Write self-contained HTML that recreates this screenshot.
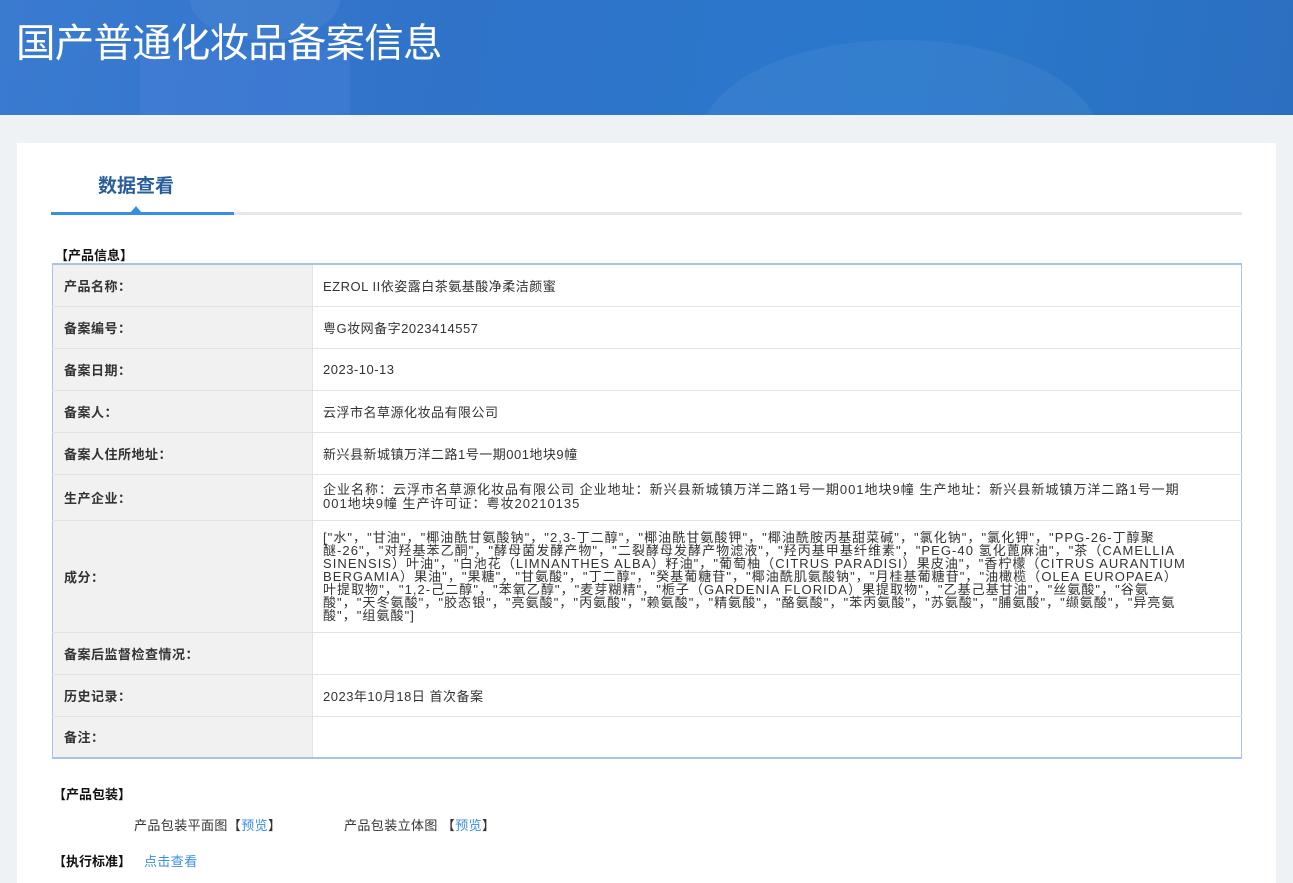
<!DOCTYPE html>
<html><head><meta charset="utf-8"><style>
*{margin:0;padding:0;box-sizing:border-box}
body{width:1293px;height:873px;overflow:hidden;background:#eff2f5;font-family:"Liberation Sans","Noto Sans CJK SC",sans-serif;color:#333;font-size:13px;position:relative}
.hd{position:absolute;left:0;top:0;width:1293px;height:115px;background:linear-gradient(100deg,#3a7bd0 0%,#2f73c9 35%,#2a78cc 70%,#2b6fc0 100%);overflow:hidden}
.hd h1{position:absolute;left:16px;top:12px;color:#fff;font-size:39.5px;font-weight:normal;letter-spacing:-0.8px;font-family:"Noto Sans CJK SC",sans-serif}
.card{position:absolute;left:17px;top:143px;width:1259px;height:740px;background:#fff}
.tab{position:absolute;left:98px;top:171px;font-size:19px;font-weight:bold;color:#2a5d9c}
.line{position:absolute;left:51px;top:212px;width:1191px;height:3px;background:#e6e8eb}
.line2{position:absolute;left:51px;top:212px;width:183px;height:3px;background:#3b8de0}
.tri{position:absolute;left:130px;top:206px;width:0;height:0;border-left:6px solid transparent;border-right:6px solid transparent;border-bottom:7px solid #3b8de0}
.sec{position:absolute;font-weight:bold;color:#111;font-size:13px}
table{position:absolute;left:52px;top:263px;width:1190px;border-collapse:collapse;border:1px solid #a9c3e6;border-top:2px solid #a9c3e6;border-bottom:2px solid #a9c3e6}
td{border-bottom:1px solid #e3e3e3;vertical-align:middle;font-size:13px;letter-spacing:0.5px}
td.l{width:260px;background:#f1f1f1;font-weight:bold;padding-left:11px;border-right:1px solid #e3e3e3;color:#333}
td.r{padding-left:10px;color:#333}
.ing{font-size:13px;line-height:13px;letter-spacing:1.05px}
a{color:#3a8ee6;text-decoration:none}
</style></head><body>
<div class="hd">
<div style="position:absolute;left:140px;top:50px;width:210px;height:80px;background:rgba(80,130,220,.35)"></div>
<div style="position:absolute;left:190px;top:-40px;width:150px;height:80px;border-radius:50%;background:rgba(255,255,255,.06)"></div>
<div style="position:absolute;left:700px;top:40px;width:400px;height:200px;border-radius:50%;background:rgba(255,255,255,.05)"></div>
<h1>国产普通化妆品备案信息</h1></div>
<div class="card"></div>
<div class="tab">数据查看</div>
<div class="line"></div><div class="line2"></div><div class="tri"></div>
<div class="sec" style="left:55px;top:245px">【产品信息】</div>
<table>
<tr style="height:42px"><td class="l">产品名称：</td><td class="r">EZROL II依姿露白茶氨基酸净柔洁颜蜜</td></tr>
<tr style="height:42px"><td class="l">备案编号：</td><td class="r">粤G妆网备字2023414557</td></tr>
<tr style="height:42px"><td class="l">备案日期：</td><td class="r">2023-10-13</td></tr>
<tr style="height:42px"><td class="l">备案人：</td><td class="r">云浮市名草源化妆品有限公司</td></tr>
<tr style="height:42px"><td class="l">备案人住所地址：</td><td class="r">新兴县新城镇万洋二路1号一期001地块9幢</td></tr>
<tr style="height:46px"><td class="l">生产企业：</td><td class="r" style="line-height:14px;letter-spacing:1px">企业名称：云浮市名草源化妆品有限公司 企业地址：新兴县新城镇万洋二路1号一期001地块9幢 生产地址：新兴县新城镇万洋二路1号一期<br>001地块9幢 生产许可证：粤妆20210135</td></tr>
<tr style="height:112px"><td class="l">成分：</td><td class="r ing">["水"，"甘油"，"椰油酰甘氨酸钠"，"2,3-丁二醇"，"椰油酰甘氨酸钾"，"椰油酰胺丙基甜菜碱"，"氯化钠"，"氯化钾"，"PPG-26-丁醇聚<br>醚-26"，"对羟基苯乙酮"，"酵母菌发酵产物"，"二裂酵母发酵产物滤液"，"羟丙基甲基纤维素"，"PEG-40 氢化蓖麻油"，"茶（CAMELLIA<br>SINENSIS）叶油"，"白池花（LIMNANTHES ALBA）籽油"，"葡萄柚（CITRUS PARADISI）果皮油"，"香柠檬（CITRUS AURANTIUM<br>BERGAMIA）果油"，"果糖"，"甘氨酸"，"丁二醇"，"癸基葡糖苷"，"椰油酰肌氨酸钠"，"月桂基葡糖苷"，"油橄榄（OLEA EUROPAEA）<br>叶提取物"，"1,2-己二醇"，"苯氧乙醇"，"麦芽糊精"，"栀子（GARDENIA FLORIDA）果提取物"，"乙基己基甘油"，"丝氨酸"，"谷氨<br>酸"，"天冬氨酸"，"胶态银"，"亮氨酸"，"丙氨酸"，"赖氨酸"，"精氨酸"，"酪氨酸"，"苯丙氨酸"，"苏氨酸"，"脯氨酸"，"缬氨酸"，"异亮氨<br>酸"，"组氨酸"]</td></tr>
<tr style="height:42px"><td class="l">备案后监督检查情况：</td><td class="r"></td></tr>
<tr style="height:42px"><td class="l">历史记录：</td><td class="r">2023年10月18日 首次备案</td></tr>
<tr style="height:42px"><td class="l">备注：</td><td class="r"></td></tr>
</table>
<div class="sec" style="left:53px;top:784px">【产品包装】</div>
<div style="position:absolute;left:134px;top:815px;letter-spacing:0.4px">产品包装平面图【<a>预览</a>】</div>
<div style="position:absolute;left:344px;top:815px;letter-spacing:0.4px">产品包装立体图 【<a>预览</a>】</div>
<div class="sec" style="left:53px;top:851px">【执行标准】</div>
<div style="position:absolute;left:144px;top:851px;letter-spacing:0.4px"><a>点击查看</a></div>
</body></html>
